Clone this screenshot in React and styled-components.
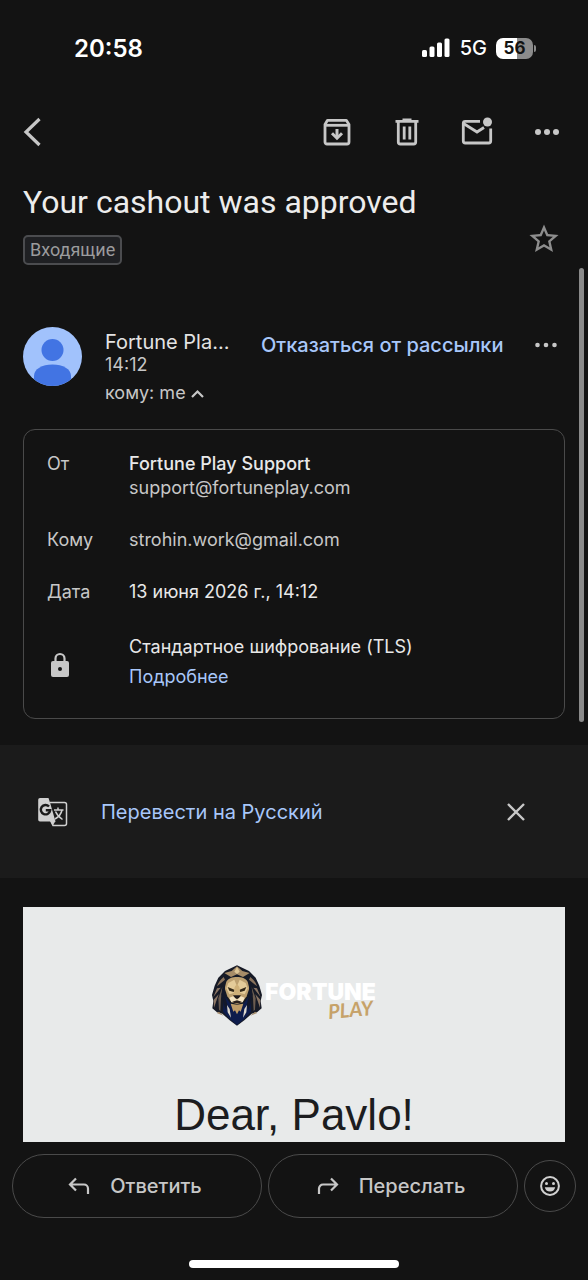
import React from "react";
import styled, { createGlobalStyle } from "styled-components";

const Global = createGlobalStyle`
  *, *::before, *::after { box-sizing: border-box; }
  html, body { margin: 0; background: #131313; }
  body { font-family: Inter, "Noto Sans", sans-serif; color: #e3e3e3; }
  button { font: inherit; color: inherit; background: none; border: 0; padding: 0; cursor: pointer; }
  h1, h2, p, dl, dd, dt { margin: 0; font-weight: 400; }
  a { text-decoration: none; }
  svg { display: block; flex: none; }
`;

const Screen = styled.div`
  position: relative;
  display: flex;
  flex-direction: column;
  min-height: 100vh;
`;

const StatusBar = styled.header`
  display: flex;
  align-items: center;
  justify-content: space-between;
  height: 96px;
  padding: 0 52px 0 74px;
  color: #fff;
`;

const Clock = styled.time`
  font-size: 24px;
  font-weight: 600;
`;

const StatusIcons = styled.div`
  display: flex;
  align-items: center;
  gap: 9px;
  font-size: 20px;
  font-weight: 500;
`;

const BatteryWrap = styled.span`
  display: flex;
  align-items: center;
  gap: 1px;
`;

const Battery = styled.span`
  width: 37px;
  height: 21px;
  border-radius: 7px;
  background: linear-gradient(90deg, #fff 56%, #8b8b8b 56%);
  color: #131313;
  font-size: 17px;
  font-weight: 700;
  line-height: 21px;
  text-align: center;
`;

const BatteryTip = styled.span`
  width: 2px;
  height: 7px;
  border-radius: 0 2px 2px 0;
  background: #8b8b8b;
`;

const Toolbar = styled.nav`
  display: flex;
  align-items: center;
  height: 72px;
  padding: 0 25px 0 23px;
`;

const Actions = styled.div`
  display: flex;
  gap: 38px;
  margin-left: auto;
`;

const IconButton = styled.button`
  display: flex;
  align-items: center;
  justify-content: ${(p) => p.$align || "center"};
  width: 32px;
  height: 32px;
  color: ${(p) => p.$color || "#c7c7c7"};
  flex: none;
`;

const Subject = styled.section`
  display: flex;
  align-items: flex-end;
  justify-content: space-between;
  padding: 14px 28px 0 23px;
`;

const Title = styled.h1`
  font-family: Roboto, sans-serif;
  font-size: 32px;
  line-height: 40px;
  color: #ececec;
`;

const Label = styled.button`
  height: 30px;
  margin-top: 13px;
  padding: 0 5px;
  border: 2px solid #4b4c4f;
  border-radius: 5px;
  background: #1f2023;
  color: #9b9b9d;
  font-family: Roboto, sans-serif;
  font-size: 18px;
  line-height: 26px;
`;

const StarSlot = styled.div`
  padding-bottom: 10px;
`;

const Sender = styled.section`
  display: flex;
  align-items: flex-start;
  padding: 62px 26px 0 23px;
`;

const SenderText = styled.div`
  width: 124px;
  margin: 3px 32px 0 23px;
`;

const SenderName = styled.h2`
  font-size: 20px;
  line-height: 24px;
  white-space: nowrap;
`;

const SenderTime = styled.p`
  font-size: 18px;
  line-height: 22px;
  color: #c7c7c7;
`;

const Recipient = styled.button`
  display: flex;
  align-items: center;
  gap: 5px;
  margin-top: 5px;
  font-size: 18px;
  line-height: 24px;
  color: #c7c7c7;
`;

const TextButton = styled.button`
  color: #a8c7fa;
  font-size: 20px;
  line-height: 26px;
  font-weight: 500;
  white-space: nowrap;
`;

const SenderActions = styled.div`
  display: flex;
  flex: 1;
  align-items: center;
  justify-content: space-between;
  margin-top: 2px;
`;

const Details = styled.dl`
  display: flex;
  flex-direction: column;
  gap: 28px;
  margin: 24px 23px 0;
  padding: 22px 23px 29px;
  border: 1px solid #4a4a4a;
  border-radius: 12px;
  font-size: 18px;
  line-height: 24px;
`;

const DetailRow = styled.div`
  display: grid;
  grid-template-columns: 82px 1fr;
  align-items: ${(p) => (p.$centered ? "center" : "start")};
  padding-top: ${(p) => (p.$centered ? 3 : 0)}px;
`;

const Term = styled.dt`
  color: #c7c7c7;
`;

const LockTerm = styled(Term)`
  padding-top: 6px;
`;

const Value = styled.dd`
  display: flex;
  flex-direction: column;
  gap: ${(p) => p.$gap || 0}px;
  color: ${(p) => (p.$muted ? "#c7c7c7" : "#e8e8e8")};
`;

const Strong = styled.span`
  font-weight: 500;
`;

const Muted = styled.span`
  color: #c7c7c7;
`;

const DetailLink = styled.a`
  color: #a8c7fa;
`;

const Translate = styled.section`
  display: flex;
  align-items: center;
  height: 133px;
  margin-top: 26px;
  padding: 0 56px 0 37px;
  background: #1b1b1b;
`;

const TranslateAction = styled(TextButton)`
  margin: 0 auto 0 32px;
  font-weight: 400;
`;

const Letter = styled.article`
  flex: 1;
  display: flex;
  flex-direction: column;
  align-items: center;
  margin: 29px 23px 0;
  padding-top: 58px;
  background: #e8eaea;
  color: #1c1d1f;
`;

const Logo = styled.div`
  display: flex;
  align-items: flex-start;
  gap: 3px;
`;

const Wordmark = styled.div`
  display: flex;
  flex-direction: column;
  align-items: flex-end;
  padding-top: 17px;
`;

const WordTop = styled.span`
  color: #fff;
  font-size: 23px;
  line-height: 20px;
  font-weight: 900;
`;

const WordBottom = styled.span`
  margin-right: 3px;
  color: #c6a269;
  font-family: Lato, sans-serif;
  font-size: 20px;
  line-height: 14px;
  font-style: italic;
  font-weight: 700;
  transform: rotate(-5deg);
`;

const Greeting = styled.h2`
  margin-top: 63px;
  font-family: "Liberation Sans", sans-serif;
  font-size: 44px;
  line-height: 52px;
`;

const ReplyBar = styled.footer`
  display: flex;
  align-items: center;
  gap: 6px;
  padding: 12px 12px 0;
`;

const ReplyButton = styled.button`
  flex: 1;
  display: flex;
  align-items: center;
  justify-content: center;
  gap: 20px;
  height: 64px;
  padding-right: 4px;
  border: 1px solid #4a4a4a;
  border-radius: 32px;
  color: #c7c7c7;
  font-size: 20px;
  font-weight: 500;
`;

const ReactionButton = styled.button`
  display: grid;
  place-items: center;
  width: 52px;
  height: 52px;
  border: 1px solid #4a4a4a;
  border-radius: 50%;
  color: #d0d0d0;
`;

const HomeIndicator = styled.div`
  width: 210px;
  height: 8px;
  margin: 42px auto 12px;
  border-radius: 4px;
  background: #fff;
`;

const ScrollThumb = styled.div`
  position: absolute;
  top: 268px;
  right: 4px;
  width: 5px;
  height: 454px;
  border-radius: 3px;
  background: #8a8a8a;
`;

const Signal = () => (
  <svg width="29" height="20" viewBox="0 0 29 20" fill="#fff" aria-hidden="true">
    <rect x="0" y="12" width="5" height="7" rx="1.5" />
    <rect x="7.500" y="8.500" width="5" height="10.500" rx="1.500" />
    <rect x="15" y="4.500" width="5" height="14.500" rx="1.500" />
    <rect x="22.500" y="0.500" width="5" height="18.500" rx="1.500" />
  </svg>
);

const BackIcon = () => (
  <svg width="18" height="30" viewBox="0 0 18 30" fill="none" stroke="currentColor" strokeWidth="3.200" aria-hidden="true">
    <path d="M16.500 2 3 15l13.500 13" />
  </svg>
);

const ArchiveIcon = () => (
  <svg width="32" height="32" viewBox="0 0 32 32" fill="none" stroke="currentColor" strokeWidth="2.800" aria-hidden="true">
    <path d="M4 8.500 6.500 4.300h18.800L28 8.500V26a2 2 0 0 1-2 2H6a2 2 0 0 1-2-2z" strokeLinejoin="round" />
    <path d="M4 9.300h24" />
    <path d="M16 13v9" strokeWidth="3" />
    <path d="m11 17.200 5 5 5-5" strokeWidth="3" />
  </svg>
);

const TrashIcon = () => (
  <svg width="32" height="32" viewBox="0 0 32 32" fill="none" stroke="currentColor" strokeWidth="2.800" aria-hidden="true">
    <path d="M4.500 5.300h23M11.500 4h9" />
    <path d="M7.300 5.500V26a2 2 0 0 0 2 2h13.400a2 2 0 0 0 2-2V5.500" />
    <path d="M13.200 10.500v13M18.800 10.500v13" />
  </svg>
);

const UnreadIcon = () => (
  <svg width="32" height="32" viewBox="0 0 32 32" fill="none" stroke="currentColor" strokeWidth="2.800" aria-hidden="true">
    <path d="M19 5.300H4.300a2 2 0 0 0-2 2V25a2 2 0 0 0 2 2h23.400a2 2 0 0 0 2-2V12.500" />
    <path d="M2.500 7.500 16 16l7-4.500" />
    <circle cx="26.500" cy="6" r="4.500" fill="currentColor" stroke="none" />
  </svg>
);

const DotsIcon = () => (
  <svg width="26" height="8" viewBox="0 0 26 8" fill="currentColor" aria-hidden="true">
    <circle cx="4" cy="4" r="3" />
    <circle cx="13" cy="4" r="3" />
    <circle cx="22" cy="4" r="3" />
  </svg>
);

const SmallDotsIcon = () => (
  <svg width="24" height="6" viewBox="0 0 24 6" fill="currentColor" aria-hidden="true">
    <circle cx="3.500" cy="3" r="2.300" />
    <circle cx="12" cy="3" r="2.300" />
    <circle cx="20.500" cy="3" r="2.300" />
  </svg>
);

const StarIcon = () => (
  <svg width="32" height="32" viewBox="1 1 22 22" fill="currentColor" aria-hidden="true">
    <path d="M22 9.240l-7.190-.62L12 2 9.190 8.630 2 9.240l5.460 4.730L5.820 21 12 17.270 18.180 21l-1.630-7.030L22 9.240zM12 15.400l-3.760 2.270 1-4.280-3.320-2.880 4.380-.38L12 6.100l1.710 4.040 4.380.38-3.320 2.880 1 4.280L12 15.400z" />
  </svg>
);

const Avatar = () => (
  <svg width="59" height="59" viewBox="0 0 59 59" role="img" aria-label="Fortune Play">
    <defs>
      <clipPath id="avatarClip"><circle cx="29.500" cy="29.500" r="29.500" /></clipPath>
    </defs>
    <g clipPath="url(#avatarClip)">
      <rect width="59" height="59" fill="#a1c2fc" />
      <circle cx="29.500" cy="23" r="11" fill="#4274e3" />
      <path d="M11 59V49c0-7 8-11.500 18.500-11.500S48 42 48 49v10z" fill="#4274e3" />
    </g>
  </svg>
);

const CaretUp = () => (
  <svg width="13" height="10" viewBox="0 0 13 10" fill="none" stroke="currentColor" strokeWidth="2.200" aria-hidden="true">
    <path d="m1 9 5.500-5.500L12 9" />
  </svg>
);

const LockIcon = () => (
  <svg width="26" height="28" viewBox="0 0 26 28" aria-hidden="true">
    <path d="M8.500 11V7.500a4.500 4.500 0 0 1 9 0V11" fill="none" stroke="#c7c7c7" strokeWidth="2.200" />
    <rect x="4" y="10" width="18" height="16" rx="2" fill="#c7c7c7" />
    <circle cx="13" cy="18" r="2" fill="#131313" />
  </svg>
);

const TranslateIcon = () => (
  <svg width="32" height="32" viewBox="0 0 32 32" fill="none" aria-hidden="true">
    <path d="M13 6.500h14.500a2 2 0 0 1 2 2v19a2 2 0 0 1-2 2H16l-2.500-5" stroke="#d0d0d0" strokeWidth="1.500" />
    <path d="M3 2h8.500l1.500 4.500 5.500 19H3A1.800 1.800 0 0 1 1.200 23.700V3.800A1.800 1.800 0 0 1 3 2z" fill="#d0d0d0" />
    <path d="m13.500 25 5 0-2.700 4.500z" fill="#d0d0d0" />
    <path d="M12 10.500a4.700 4.700 0 1 0 1.200 3.800H8.800" stroke="#1b1b1b" strokeWidth="2.400" />
    <path d="M17 14h9.500M21 11.500V14M25 14c-.8 4-3.500 7-7 9M18.500 15.500c1.500 3.500 4 6 7 8" stroke="#d0d0d0" strokeWidth="1.500" />
  </svg>
);

const CloseIcon = () => (
  <svg width="20" height="20" viewBox="0 0 20 20" fill="none" stroke="currentColor" strokeWidth="2.400" aria-hidden="true">
    <path d="m2 2 16 16M18 2 2 18" />
  </svg>
);

const LionIcon = () => (
  <svg width="50" height="61" viewBox="39 18 150 183" role="img" aria-label="Lion">
    <path d="M114 19 78 36 58 56 47 80 39 108 43 126 40 148 54 160 70 164 92 184 114 200 136 184 158 164 174 160 188 148 185 126 189 108 181 80 170 56 150 36z" fill="#161a26" />
    <path d="M53 162 60 158 74 170 68 168zM175 162l-7-4-14 12 6-2z" fill="#a58c6c" />
    <path d="m76 42 22-6 16-14 16 14 22 6-20 12-18-8-18 8z" fill="#a68c68" />
    <path d="m114 24-8 14 8 7 8-7z" fill="#dec798" />
    <path d="M74 54c-9 7-17 17-20 28l24-20zM154 54c9 7 17 17 20 28l-24-20z" fill="#8a735c" />
    <path d="m54 88-11 26 22-28zM174 88l11 26-22-28zM44 122l1 24 14-40zM184 122l-1 24-14-40z" fill="#8a7564" />
    <path d="m70 84-12 34 2 34 4 4 2-38zM158 84l12 34-2 34-4 4-2-38z" fill="#6b5c50" />
    <path d="M75 108l-3 50 20 22 22 18 22-18 20-22-3-50-22 30H97z" fill="#0d1c4c" />
    <path d="M82 68c6-10 18-14 32-14s26 4 32 14l5 20-8 24-13 18-16 6-16-6-13-18-8-24z" fill="#bda070" />
    <path d="m88 72 18-10 8 20 8-20 18 10 6 16-9 18-23-6-23 6-9-18z" fill="#e4cb99" />
    <path d="m86 84 22 9-4 6-13-4zM142 84l-22 9 4 6 13-4z" fill="#332818" />
    <path d="m107 84 7-10 7 10 4 26-11 6-11-6z" fill="#cfb078" />
    <path d="M102 109h24l-8 10h-8z" fill="#201a1b" />
    <path d="m91 116 11-4 12 10 12-10 11 4-6 14-17-4-17 4z" fill="#f4e4c2" />
    <path d="m100 128 14-4 14 4-6 5h-16z" fill="#2b211c" />
    <path d="m95 134 19 3 19-3-8 24-5-4-6 12-6-12-5 4z" fill="#bf9c67" />
    <path d="m78 76-11 30 12 46 6-14-7-28zM150 76l11 30-12 46-6-14 7-28z" fill="#13182a" />
    <path d="m84 138 2 22 10 16-4-26zM144 138l-2 22-10 16 4-26z" fill="#ddd8cd" />
  </svg>
);

const ReplyIcon = () => (
  <svg width="22" height="18" viewBox="0 0 22 18" fill="none" stroke="currentColor" strokeWidth="2.200" aria-hidden="true">
    <path d="M8 1.500 2 7.500l6 6M2.500 7.500H16a4 4 0 0 1 4 4V17" />
  </svg>
);

const ForwardIcon = () => (
  <svg width="22" height="18" viewBox="0 0 22 18" fill="none" stroke="currentColor" strokeWidth="2.200" aria-hidden="true">
    <path d="m14 1.500 6 6-6 6M19.500 7.500H6a4 4 0 0 0-4 4V17" />
  </svg>
);

const SmileIcon = () => (
  <svg width="22" height="22" viewBox="0 0 22 22" aria-hidden="true">
    <circle cx="11" cy="11" r="8.900" fill="none" stroke="currentColor" strokeWidth="2" />
    <circle cx="7.500" cy="8.500" r="1.500" fill="currentColor" />
    <circle cx="14.500" cy="8.500" r="1.500" fill="currentColor" />
    <path d="M5.800 12.200h10.400a5.300 5.300 0 0 1-10.400 0z" fill="currentColor" />
  </svg>
);

export default function App() {
  return (
    <Screen>
      <Global />
      <StatusBar>
        <Clock>20:58</Clock>
        <StatusIcons>
          <Signal />
          <span>5G</span>
          <BatteryWrap>
            <Battery>56</Battery>
            <BatteryTip />
          </BatteryWrap>
        </StatusIcons>
      </StatusBar>

      <Toolbar>
        <IconButton $align="flex-start" aria-label="Назад"><BackIcon /></IconButton>
        <Actions>
          <IconButton aria-label="Архивировать"><ArchiveIcon /></IconButton>
          <IconButton aria-label="Удалить"><TrashIcon /></IconButton>
          <IconButton aria-label="Отметить как непрочитанное"><UnreadIcon /></IconButton>
          <IconButton aria-label="Ещё"><DotsIcon /></IconButton>
        </Actions>
      </Toolbar>

      <Subject>
        <div>
          <Title>Your cashout was approved</Title>
          <Label>Входящие</Label>
        </div>
        <StarSlot>
          <IconButton $color="#8e8e8e" aria-label="Пометить"><StarIcon /></IconButton>
        </StarSlot>
      </Subject>

      <Sender>
        <Avatar />
        <SenderText>
          <SenderName>Fortune Pla...</SenderName>
          <SenderTime>14:12</SenderTime>
          <Recipient>кому: me <CaretUp /></Recipient>
        </SenderText>
        <SenderActions>
          <TextButton>Отказаться от рассылки</TextButton>
          <IconButton aria-label="Ещё"><SmallDotsIcon /></IconButton>
        </SenderActions>
      </Sender>

      <Details>
        <DetailRow>
          <Term>От</Term>
          <Value>
            <Strong>Fortune Play Support</Strong>
            <Muted>support@fortuneplay.com</Muted>
          </Value>
        </DetailRow>
        <DetailRow>
          <Term>Кому</Term>
          <Value $muted>strohin.work@gmail.com</Value>
        </DetailRow>
        <DetailRow>
          <Term>Дата</Term>
          <Value>13 июня 2026 г., 14:12</Value>
        </DetailRow>
        <DetailRow $centered>
          <LockTerm><LockIcon /></LockTerm>
          <Value $gap={6}>
            <span>Стандартное шифрование (TLS)</span>
            <DetailLink href="#details">Подробнее</DetailLink>
          </Value>
        </DetailRow>
      </Details>

      <Translate>
        <TranslateIcon />
        <TranslateAction>Перевести на Русский</TranslateAction>
        <IconButton aria-label="Закрыть"><CloseIcon /></IconButton>
      </Translate>

      <Letter>
        <Logo>
          <LionIcon />
          <Wordmark>
            <WordTop>FORTUNE</WordTop>
            <WordBottom>PLAY</WordBottom>
          </Wordmark>
        </Logo>
        <Greeting>Dear, Pavlo!</Greeting>
      </Letter>

      <ReplyBar>
        <ReplyButton><ReplyIcon />Ответить</ReplyButton>
        <ReplyButton><ForwardIcon />Переслать</ReplyButton>
        <ReactionButton aria-label="Добавить реакцию"><SmileIcon /></ReactionButton>
      </ReplyBar>
      <HomeIndicator />
      <ScrollThumb />
    </Screen>
  );
}
